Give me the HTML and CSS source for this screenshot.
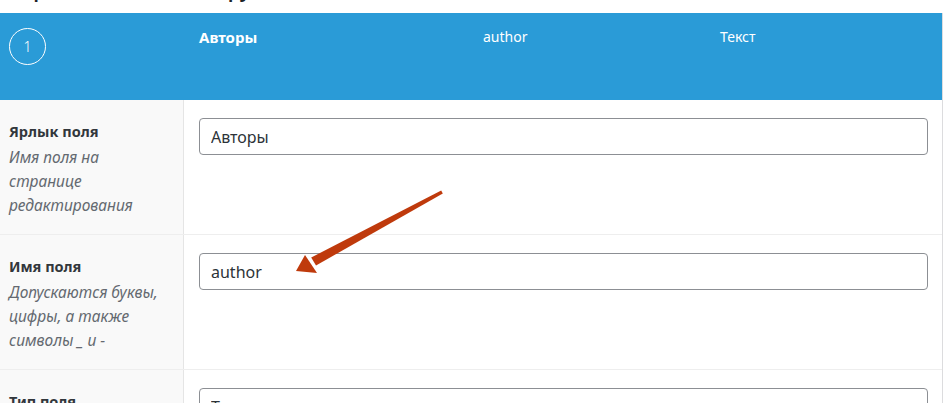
FILE: index.html
```html
<!DOCTYPE html>
<html lang="ru">
<head>
    <meta charset="UTF-8">
    <title>Поля группы</title>
    <link rel="stylesheet" href="styles.css">
</head>
<body>
    <h1 class="page-title">Управление полями группы</h1>

    <div class="field-box">
        <div class="field-head">
            <div class="head-cell"><span class="field-order">1</span></div>
            <div class="head-cell head-label">Авторы</div>
            <div class="head-cell">author</div>
            <div class="head-cell">Текст</div>
        </div>

        <div class="field-row">
            <div class="field-label">
                <div class="label-title">Ярлык поля</div>
                <div class="label-desc">Имя поля на странице редактирования</div>
            </div>
            <div class="field-input">
                <input class="text-input" type="text" value="Авторы">
            </div>
        </div>

        <div class="field-row">
            <div class="field-label">
                <div class="label-title">Имя поля</div>
                <div class="label-desc">Допускаются буквы, цифры, а также символы _ и -</div>
            </div>
            <div class="field-input">
                <input class="text-input" type="text" value="author">
            </div>
        </div>

        <div class="field-row">
            <div class="field-label">
                <div class="label-title">Тип поля</div>
                <div class="label-desc">Тип данных поля</div>
            </div>
            <div class="field-input">
                <input class="text-input" type="text" value="Текст">
            </div>
        </div>
    </div>

    <!-- стрелка-пометка поверх формы -->
    <svg class="pointer" width="950" height="403" viewBox="0 0 950 403">
        <polygon fill="#bf3a0c" points="441.2,190.6 442.8,193.4 316,265.5 311.2,257.5" />
        <polygon fill="#bf3a0c" points="296,271 305,255 317,273" />
    </svg>
</body>
</html>
```

FILE: styles.css
```css
* {
    margin: 0;
    padding: 0;
    box-sizing: border-box;
}

body {
    width: 950px;
    height: 403px;
    overflow: hidden;
    background: white;
    font-family: 'Noto Sans', 'Open Sans', sans-serif;
    font-size: 14px;
    color: #32373c;
    position: relative;
}

.page-title {
    font-size: 20px;
    line-height: 26px;
    font-weight: 600;
    color: #1d2327;
    padding-left: 8px;
    margin: -23px 0 10px;
    white-space: nowrap;
}

.field-box {
    width: 943px;
    border-right: 1px solid #dcdcde;
}

.field-head {
    height: 87px;
    background: #2a9bd7;
    color: white;
    display: grid;
    grid-template-columns: 199px 284px 237px 1fr;
    align-items: start;
    padding-top: 14px;
    font-size: 14px;
    line-height: 20px;
}

.head-cell:first-child {
    padding-left: 9px;
}

.field-order {
    display: flex;
    align-items: center;
    justify-content: center;
    width: 37px;
    height: 37px;
    margin-top: 1px;
    border: 1px solid white;
    border-radius: 50%;
    font-size: 14px;
    font-weight: 300;
}

.head-label {
    font-size: 15px;
    font-weight: 700;
}

.field-row {
    display: grid;
    grid-template-columns: 184px 1fr;
    border-bottom: 1px solid #eeeeee;
}

.field-label {
    background: #f9f9f9;
    border-right: 1px solid #e5e5e5;
    padding: 19px 14px 17px 9px;
    line-height: 24px;
}

.label-title {
    font-size: 14.5px;
    font-weight: 700;
    color: #32373c;
    margin-bottom: 2px;
}

.label-desc {
    font-size: 15.5px;
    font-style: italic;
    color: #646970;
}

.field-input {
    padding: 18px 14px 0 15px;
}

.text-input {
    display: block;
    width: 100%;
    height: 37px;
    padding: 0 11px;
    border: 1px solid #8c8f94;
    border-radius: 4px;
    font-family: 'Noto Sans', 'Open Sans', sans-serif;
    font-size: 16px;
    color: #2c3338;
    background: white;
}

.pointer {
    position: absolute;
    left: 0;
    top: 0;
    pointer-events: none;
}
```
